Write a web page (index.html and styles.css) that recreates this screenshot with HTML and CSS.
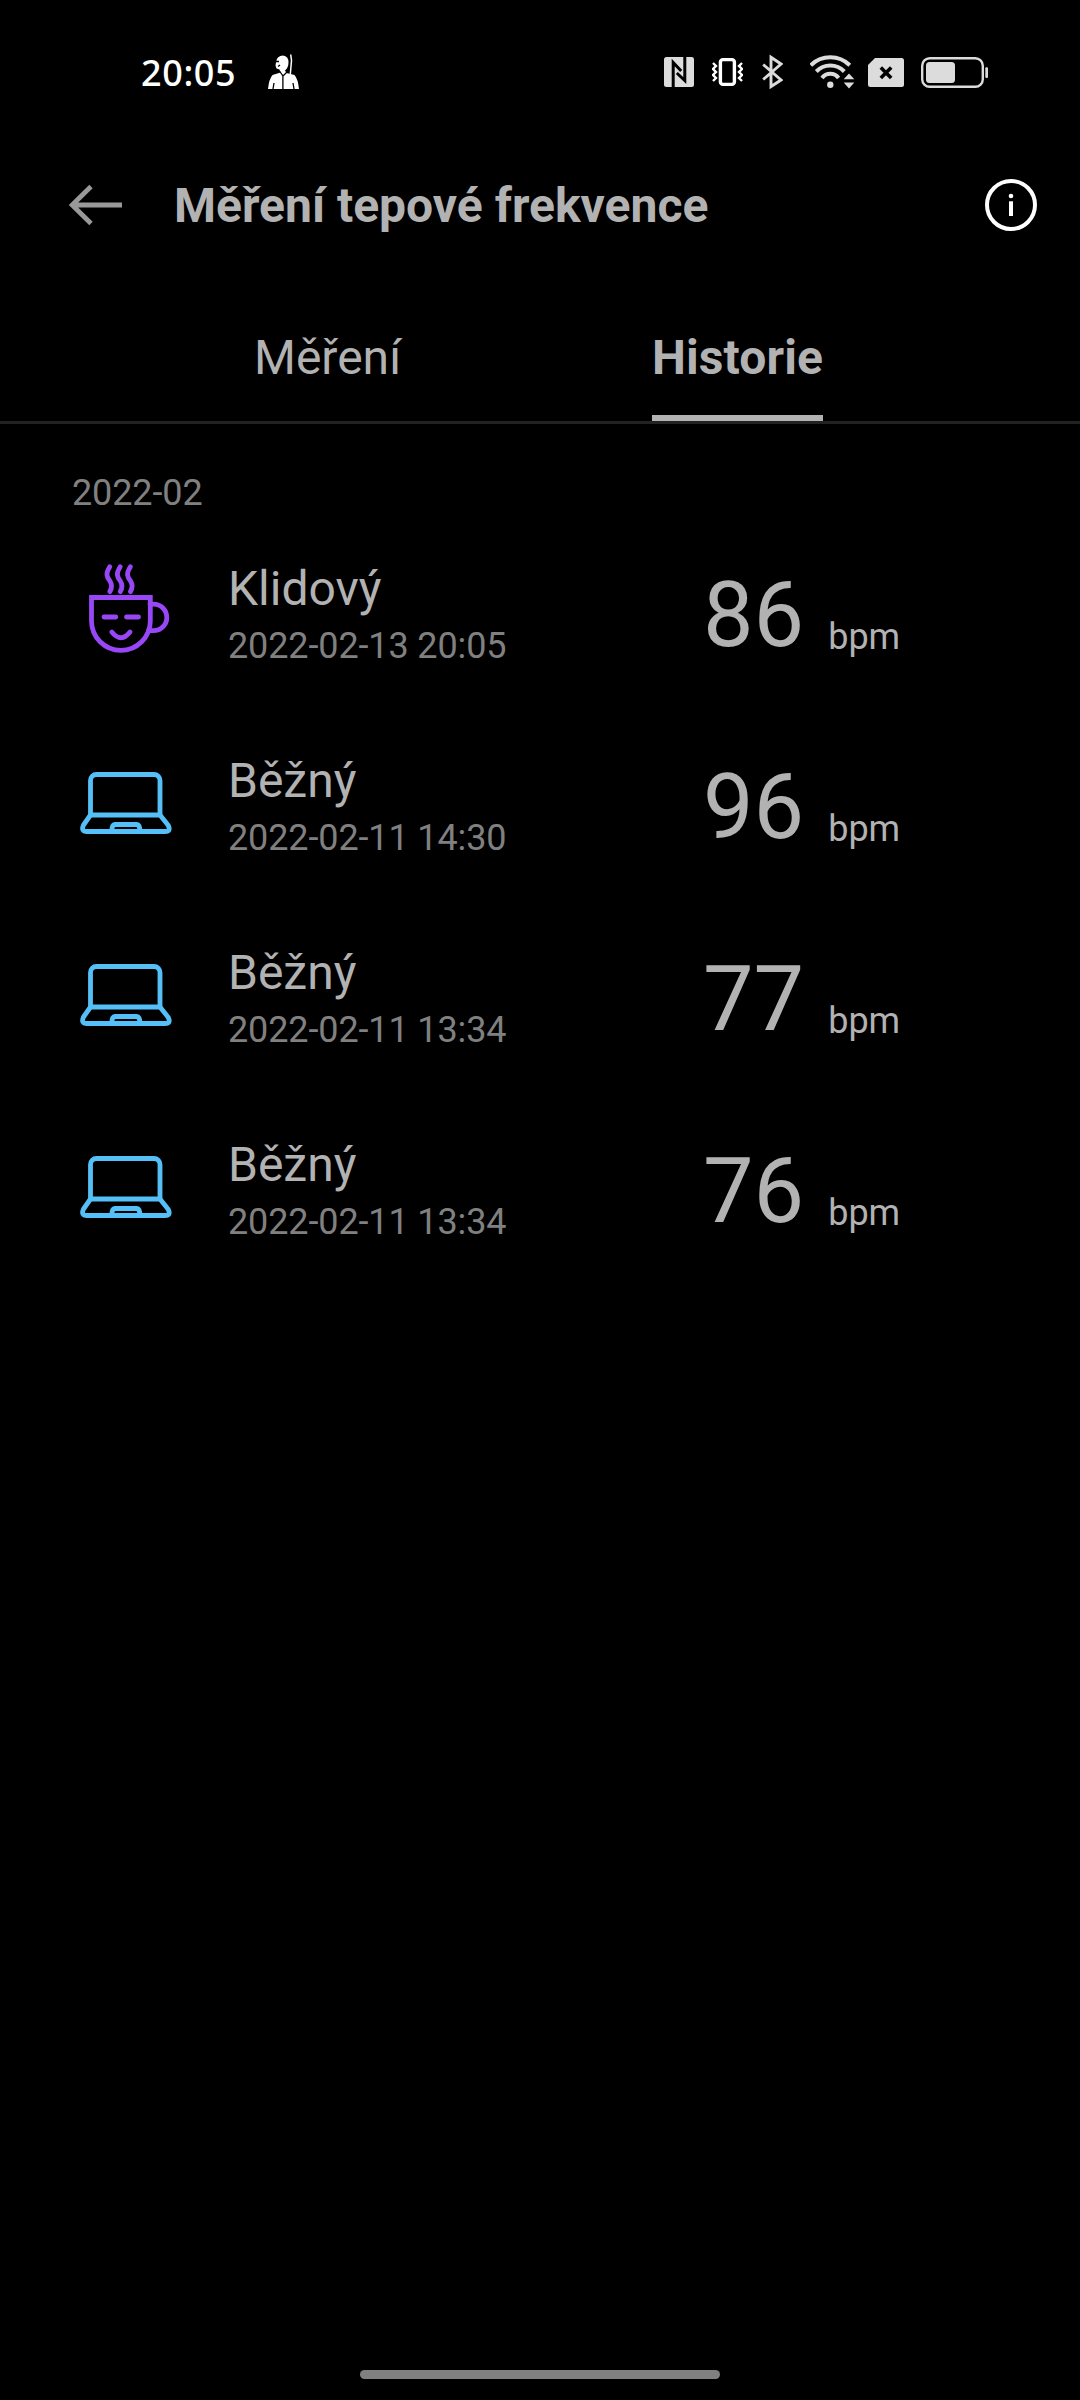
FILE: index.html
```
<!DOCTYPE html>
<html lang="cs">

<head>
    <meta charset="UTF-8">
    <meta name="viewport" content="width=device-width, initial-scale=1.0">
    <title>Měření tepové frekvence</title>
    <link rel="stylesheet" href="styles.css">
</head>

<body>
    <!-- shared row icons -->
    <svg class="sprite" width="0" height="0">
        <symbol id="cup" viewBox="0 0 108 108">
            <path d="M19.5 39.5H78.3V63a29.4 29.4 0 0 1-58.8 0z" />
            <path d="M78 46.1h3.5a13.3 13.3 0 0 1 0 26.6H76.5" />
            <path d="M32 59H43.8M54.5 59H66.5M39.8 74q9.2 11.5 18.2 0" />
            <path d="M37.8 8.8c-4.5 7-3 10 0 14c2.5 4 2.5 7 0 10.8M48.2 8.8c-4.5 7-3 10 0 14c2.5 4 2.5 7 0 10.8M58.4 8.8c-4.5 7-3 10 0 14c2.5 4 2.5 7 0 10.8" />
        </symbol>
        <symbol id="laptop" viewBox="0 0 108 108">
            <path d="M18.5 65V30.5a6 6 0 0 1 6-6H82a6 6 0 0 1 6 6V65z" />
            <path d="M18.5 65l-7 10q-3 6.500 3.500 6.500H93q6.500 0 3-6.500L88 65" />
            <path d="M39.700 80.500l.5-3q.6-3 3.500-3H64q2.900 0 3.500 3l.5 3" />
        </symbol>
    </svg>

    <div class="screen">
        <div class="status">
            <span class="clock">20:05</span>
            <svg class="person" width="32" height="36">
                <path fill="#fff" d="M8 8q1-6.500 7-6.500q5.500.5 5.500 7q0 5-3.500 8l1.500 2.500l8 2q3.500 4 4.500 14H0q1-10 4.500-14l8-2.500l-1-3l-3-1l-1-3z" />
                <path stroke="#fff" stroke-width="1.500" d="M22.700.5l.8 6l-1.200 14" fill="none" />
                <path stroke="#000" stroke-width="1.300" fill="none" d="M6 7.500h5M10 12.500l2-1.500M11.500 17l3.500 5l4-4M14.900 22v13M5 35l1-6M26 35l-1-6" />
            </svg>
            <div class="icons">
                <svg class="nfc" width="30" height="36">
                    <rect y="3" width="30" height="30" rx="2.500" fill="#dcdcdc" />
                    <path fill="none" stroke="#000" stroke-width="3" d="M9.200 33V8.500l8 8.500M20.800 3v23.500L12.800 19" />
                </svg>
                <svg class="vibrate" width="31" height="36">
                    <rect x="8.400" y="5.600" width="14" height="24.800" rx="2.500" fill="none" stroke="#fff" stroke-width="3.400" />
                    <path fill="none" stroke="#fff" stroke-width="2.400" d="M1 9l3 3l-3 3l3 3l-3 3l3 3l-3 3M30 9l-3 3l3 3l-3 3l3 3l-3 3l3 3" />
                </svg>
                <svg class="bluetooth" width="21" height="36">
                    <path fill="none" stroke="#dcdcdc" stroke-width="2.900" d="M1.200 10.500L19 26L9 32.500V3.200L19 10L1.200 25.500" />
                </svg>
                <svg class="wifi" width="45" height="36">
                    <g fill="none" stroke="#dcdcdc" stroke-width="4">
                        <path d="M.8 11.200a27.800 27.800 0 0 1 39 0" />
                        <path d="M6.300 17.500a19.400 19.400 0 0 1 28 0" />
                        <path d="M12 24a10.400 10.400 0 0 1 16.600 0" />
                    </g>
                    <circle cx="20.300" cy="30.700" r="3.200" fill="#dcdcdc" />
                    <path fill="#dcdcdc" stroke="#000" stroke-width="3" paint-order="stroke" d="M39 19.600l5.300 5.600H33.700zM39 34.500l5.300-5.900H33.700z" />
                </svg>
                <svg class="sim" width="36" height="36">
                    <path fill="#dcdcdc" d="M7 4H33.500a2.500 2.500 0 0 1 2.500 2.500V30.500a2.500 2.500 0 0 1-2.500 2.500H2.500a2.500 2.500 0 0 1-2.500-2.500V11z" />
                    <path stroke="#000" stroke-width="3.600" d="M12.800 13.500l10.400 10.400M23.200 13.500L12.800 23.900" />
                </svg>
                <svg class="battery" width="67" height="37">
                    <rect x="1.200" y="4.200" width="60.600" height="28.600" rx="7.500" fill="none" stroke="#dcdcdc" stroke-width="2.400" />
                    <rect x="5" y="8" width="29" height="21" rx="3.500" fill="#dcdcdc" />
                    <rect x="64.300" y="13.300" width="2.700" height="10.700" rx="1" fill="#dcdcdc" />
                </svg>
            </div>
        </div>

        <div class="header">
            <svg class="back" width="54" height="44">
                <path fill="none" stroke="#999" stroke-width="4.800" d="M53 22H3M22 3.500L3.200 22L22 40.500" />
            </svg>
            <h1>Měření tepové frekvence</h1>
            <svg class="info-icon" width="52" height="52">
                <circle cx="26" cy="26" r="24" fill="none" stroke="#fff" stroke-width="4" />
                <circle cx="26" cy="17" r="2.300" fill="#fff" />
                <rect x="24" y="22.300" width="4" height="14.700" fill="#fff" />
            </svg>
        </div>

        <div class="tabs">
            <div class="tab"><span>Měření</span></div>
            <div class="tab active"><span>Historie</span></div>
        </div>

        <div class="month">2022-02</div>
        <ul class="list">
            <li>
                <svg class="icon rest"><use href="#cup" /></svg>
                <div class="text">
                    <p class="name">Klidový</p>
                    <p class="date">2022-02-13 20:05</p>
                </div>
                <div class="value">86<span>bpm</span></div>
            </li>
            <li>
                <svg class="icon normal"><use href="#laptop" /></svg>
                <div class="text">
                    <p class="name">Běžný</p>
                    <p class="date">2022-02-11 14:30</p>
                </div>
                <div class="value">96<span>bpm</span></div>
            </li>
            <li>
                <svg class="icon normal"><use href="#laptop" /></svg>
                <div class="text">
                    <p class="name">Běžný</p>
                    <p class="date">2022-02-11 13:34</p>
                </div>
                <div class="value">77<span>bpm</span></div>
            </li>
            <li>
                <svg class="icon normal"><use href="#laptop" /></svg>
                <div class="text">
                    <p class="name">Běžný</p>
                    <p class="date">2022-02-11 13:34</p>
                </div>
                <div class="value">76<span>bpm</span></div>
            </li>
        </ul>

        <div class="gesture"></div>
    </div>
</body>

</html>
```
FILE: styles.css
```
* {
    margin: 0;
    padding: 0;
    box-sizing: border-box;
}

body {
    background: #000;
    color: #b2b2b2;
    font-family: Roboto, "Noto Sans", sans-serif;
}

ul {
    list-style: none;
}

svg {
    display: block;
    flex: none;
}

.sprite {
    display: none;
}

.screen {
    display: flex;
    flex-direction: column;
    width: 1080px;
    height: 2400px;
}

/* status bar */
.status {
    display: flex;
    align-items: center;
    height: 144px;
    padding: 0 92px 0 141px;
}

.clock {
    width: 127px;
    padding-top: 1px;
    color: #fff;
    font: 500 36px/50px "Noto Sans", sans-serif;
    letter-spacing: 0.6px;
}

.icons {
    display: flex;
    margin-left: auto;
}

.vibrate {
    margin-left: 18px;
}

.bluetooth {
    margin-left: 19px;
}

.wifi {
    margin-left: 27px;
}

.sim {
    margin-left: 13px;
}

.battery {
    margin-left: 17px;
}

/* title */
.header {
    display: flex;
    align-items: center;
    height: 122px;
    padding: 0 43px 0 69px;
}

h1 {
    margin-left: 51px;
    padding-top: 2px;
    font-size: 48px;
    line-height: 56px;
    font-weight: 700;
}

.info-icon {
    margin-left: auto;
}

/* tabs */
.tabs {
    display: grid;
    grid-template-columns: 410px 410px;
    height: 158px;
    padding: 64px 137px 0 123px;
    border-bottom: 3px solid #222;
    font-size: 48px;
    line-height: 56px;
    text-align: center;
}

.tab span {
    display: inline-block;
    height: 91px;
    margin-left: -1px;
}

.active span {
    border-bottom: 6px solid #b2b2b2;
    font-weight: 700;
    letter-spacing: 0.1px;
}

/* history */
.month {
    padding: 48px 0 0 72px;
    color: #808080;
    font-size: 36px;
    line-height: 42px;
    letter-spacing: -0.12px;
}

.list li {
    display: flex;
    height: 192px;
    padding: 44px 0 0 72px;
}

.icon {
    width: 108px;
    height: 108px;
    fill: none;
    stroke-width: 4.8;
    stroke-linecap: round;
}

.rest {
    stroke: #9747f5;
}

.normal {
    stroke: #55c0f8;
}

.text {
    width: 475px;
    margin-left: 48px;
    padding-top: 3px;
}

.name {
    font-size: 48px;
    line-height: 56px;
}

.date {
    margin-top: 8px;
    color: #808080;
    font-size: 36px;
    line-height: 42px;
    letter-spacing: -0.12px;
}

.value {
    display: flex;
    align-items: flex-start;
    font-size: 90px;
    line-height: 106px;
    padding-top: 5px;
}

.value span {
    margin: 53px 0 0 24px;
    font-size: 36px;
    line-height: 42px;
}

.gesture {
    width: 360px;
    height: 9px;
    margin: auto auto 21px;
    border-radius: 5px;
    background: #808080;
}
```
